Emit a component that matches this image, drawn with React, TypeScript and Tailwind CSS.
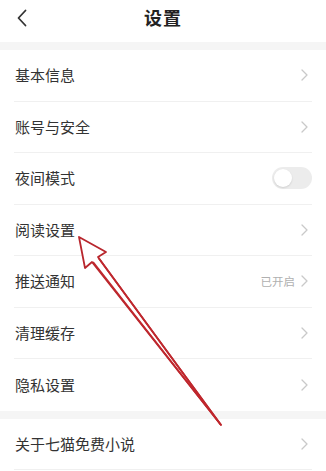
const font = {
  fontFamily: '"Noto Sans CJK SC", "Noto Sans", sans-serif',
};

type Row = {
  label: string;
  kind: "link" | "toggle" | "status";
  status?: string;
};

const rows: Row[] = [
  { label: "基本信息", kind: "link" },
  { label: "账号与安全", kind: "link" },
  { label: "夜间模式", kind: "toggle" },
  { label: "阅读设置", kind: "link" },
  { label: "推送通知", kind: "status", status: "已开启" },
  { label: "清理缓存", kind: "link" },
  { label: "隐私设置", kind: "link" },
];

function Chevron() {
  return (
    <svg width="7" height="12" viewBox="0 0 7 12" className="shrink-0">
      <path
        d="M1 1l5 5-5 5"
        fill="none"
        stroke="#c9c9c9"
        strokeWidth="1.3"
        strokeLinecap="round"
        strokeLinejoin="round"
      />
    </svg>
  );
}

function Toggle() {
  return (
    <div className="flex h-[22px] w-[40px] items-center rounded-full bg-[#ececec] px-[2px]">
      <div className="h-[18px] w-[18px] rounded-full bg-white shadow-[0_1px_2px_rgba(0,0,0,0.12)]" />
    </div>
  );
}

function SettingRow({ row, last }: { row: Row; last?: boolean }) {
  return (
    <div className="px-[14px]">
      <div
        className={`flex h-[51.5px] items-center justify-between ${
          last ? "" : "border-b border-[#f0f0f0]"
        }`}
      >
        <span className="pl-px text-[15px] text-[#333333]">{row.label}</span>
        {row.kind === "toggle" ? (
          <Toggle />
        ) : row.kind === "status" ? (
          <div className="flex items-center gap-[6px] pr-[4px]">
            <span className="text-[11.5px] text-[#b0b0b0]">{row.status}</span>
            <Chevron />
          </div>
        ) : (
          <div className="pr-[4px]">
            <Chevron />
          </div>
        )}
      </div>
    </div>
  );
}

export default function App() {
  return (
    <div className="relative h-[471px] w-[326px] overflow-hidden bg-white" style={font}>
      <header className="relative flex h-[42px] items-center justify-center">
        <svg
          width="12"
          height="18"
          viewBox="0 0 12 18"
          className="absolute left-[16px] top-[9px]"
        >
          <path
            d="M9.5 1.5L2.5 9l7 7.5"
            fill="none"
            stroke="#333"
            strokeWidth="1.8"
            strokeLinecap="round"
            strokeLinejoin="round"
          />
        </svg>
        <h1 className="-mt-[8px] text-[18px] font-bold tracking-[1px] text-[#222]">设置</h1>
      </header>

      <div className="h-[8px] bg-[#f5f5f5]" />

      {rows.map((row, i) => (
        <SettingRow key={row.label} row={row} last={i === rows.length - 1} />
      ))}

      <div className="h-[8px] bg-[#f5f5f5]" />

      <SettingRow row={{ label: "关于七猫免费小说", kind: "link" }} />

      {/* red annotation arrow */}
      <svg
        width="326"
        height="471"
        viewBox="0 0 326 471"
        className="pointer-events-none absolute left-0 top-0"
      >
        <path
          d="M79 237 L106 252 L98 257 L221 425 L92 262 L85 268 Z"
          fill="#ffffff"
          stroke="#b8262d"
          strokeWidth="1.8"
          strokeLinejoin="round"
        />
        <path d="M98.5 258 L221 425" stroke="#c0272d" strokeWidth="1.8" />
        <path d="M93 262 L221 425" stroke="#c0272d" strokeWidth="1.8" />
      </svg>
    </div>
  );
}
